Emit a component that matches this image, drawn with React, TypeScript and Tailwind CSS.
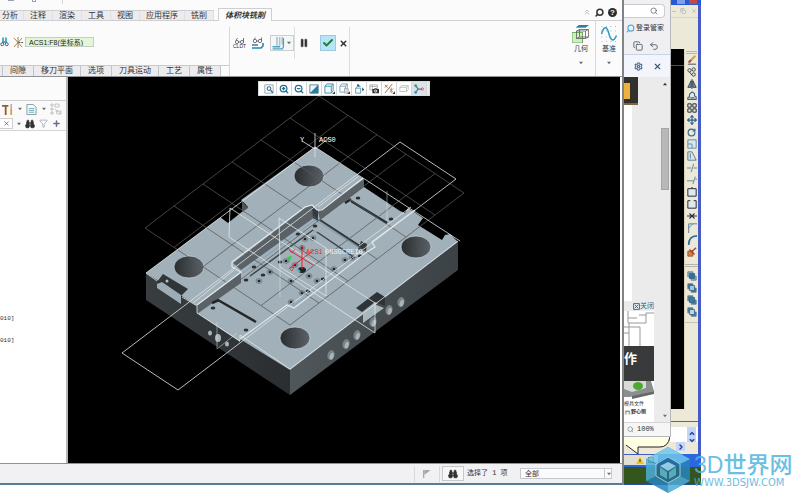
import React, { useState } from 'react';
import {
	Binoculars,
	Check,
	ChevronDown,
	ChevronRight,
	ChevronUp,
	ChevronsUp,
	Copy,
	Filter,
	Move,
	Pause,
	Plus,
	RotateCw,
	Search,
	Settings,
	Undo2,
	X,
	ZoomIn,
	ZoomOut,
} from 'lucide-react';

const ribbonTabs = ['注释', '渲染', '工具', '视图', '应用程序', '铣削'];
const dashboardTabs = ['间隙', '移刀平面', '选项', '刀具运动', '工艺', '属性'];

interface IconProps {
	children: React.ReactNode;
	className?: string;
}

function Icon({ children, className = 'h-3 w-3' }: IconProps) {
	return (
		<svg className={className} viewBox="0 0 12 12" fill="none" stroke="#26323c" strokeWidth={1} aria-hidden="true">
			{children}
		</svg>
	);
}

function Glasses() {
	return (
		<>
			<circle cx="3" cy="4" r="1.700" stroke="#555" strokeWidth=".8" />
			<circle cx="8" cy="4" r="1.700" stroke="#555" strokeWidth=".8" />
			<path d="M4.700 4h1.600M2 2.400 3.500.5M9.500 3.500V.5" stroke="#555" strokeWidth=".8" />
		</>
	);
}

function Caret() {
	return (
		<svg className="h-1 w-1 shrink-0" viewBox="0 0 6 4" aria-hidden="true">
			<path d="M0 0h6L3 4z" fill="#6c6c6c" />
		</svg>
	);
}

function Header() {
	return (
		<header>
			<div className="flex h-2 items-start gap-[18px] pl-2">
				<span className="h-px w-[6px] bg-gray-400" />
				<span className="h-[2px] w-1 border-x border-b border-gray-400" />
				<span className="ml-2 h-1 w-px bg-gray-300" />
			</div>
			<nav className="flex h-[13px] items-stretch">
				<div className="mt-[2px] flex border-t border-b border-[#cfcfd2] bg-[#ececee]">
					<button className="w-6 border-r border-[#e0e0e2] pl-[2px] text-left leading-[10px]">分析</button>
					{ribbonTabs.map((tab) => (
						<button key={tab} className="border-r border-[#e0e0e2] px-[6px] leading-[10px]">
							{tab}
						</button>
					))}
				</div>
				<span className="w-1 border-b border-[#cfcfd2]" />
				<button className="border-x border-t border-[#cfcfd2] bg-[#fbfbfb] px-[6px] leading-[13px] font-bold italic">
					体积块铣削
				</button>
				<div className="flex flex-1 items-start justify-end gap-1 border-b border-[#cfcfd2] pr-[5px]">
					<button aria-label="Collapse ribbon">
						<ChevronsUp className="h-2 w-2 text-gray-400" />
					</button>
					<button aria-label="Search commands">
						<Search className="h-[9px] w-[9px] -scale-x-100" strokeWidth={4} />
					</button>
					<button
						aria-label="Help"
						className="h-[9px] w-[9px] rounded-full bg-[#2c2c2c] text-center text-[8px] leading-[9px] font-bold text-white"
					>
						?
					</button>
				</div>
			</nav>
		</header>
	);
}

function Ribbon() {
	const [reference, setReference] = useState('ACS1:F8(坐标系)');

	return (
		<div className="flex h-14 border-b border-[#8f9296]">
			<div className="mt-[6px] flex w-[230px] flex-col justify-between border-r border-[#d8d8da]">
				<div className="flex items-center gap-[4px] pt-[9px]">
					<Icon className="h-3 w-[9px]">
						<path d="M4 0v6H8V0" stroke="#4ba6c6" strokeWidth="2.500" />
						<circle cx="3" cy="9" r="2" />
						<circle cx="9" cy="9" r="2" />
					</Icon>
					<label className="flex items-center gap-[1px]">
						<Icon className="h-[11px] w-[11px]">
							<path d="M1 1l9 10M10 1 1 11M5.500 0v12" stroke="#9d7845" />
							<path d="M6 6h6" stroke="#444" strokeDasharray="2 1" />
						</Icon>
						<input
							aria-label="Reference"
							value={reference}
							onChange={(e) => setReference(e.target.value)}
							className="h-[10px] w-[69px] border border-[#c5cfbf] bg-[#e4f6d6] px-[3px] text-[7px] leading-[8px] text-[#222] outline-none"
						/>
					</label>
				</div>
				<div className="flex h-[11px] border-t border-[#cacacc]">
					<span className="w-[3px] border-r border-[#c4c4c8] bg-[#ececee]" />
					{dashboardTabs.map((tab) => (
						<button key={tab} className="border-r border-[#c4c4c8] bg-[#ececee] px-[7px] leading-[10px]">
							{tab}
						</button>
					))}
				</div>
			</div>

			<div className="mt-[6px] flex w-[120px] items-start border-r border-[#dedee0]">
				<div className="flex h-8 items-center gap-[6px] border-r border-[#dedee0] pl-[3px]">
					<button className="flex flex-col items-center text-[5px] leading-[5px]" aria-label="Play CL data">
						<svg className="h-[6px] w-3" viewBox="0 0 12 6" fill="none" stroke="#555" strokeWidth=".8" aria-hidden="true">
							<circle cx="3" cy="4" r="1.600" />
							<circle cx="8" cy="4" r="1.600" />
							<path d="M4.600 4h1.800M2 2.400 3.500 0M9.500 4V0" />
						</svg>
						CLDT
					</button>
					<button aria-label="Simulate path">
						<Icon>
							<Glasses />
							<path d="M0 8h6M0 11h9l2-2V6" stroke="#2589ad" strokeWidth="1.600" />
						</Icon>
					</button>
					<button className="flex h-4 w-6 items-center justify-between border border-[#c9ced1] bg-[#f4f7f8] pr-[2px]" aria-label="Cut type">
						<Icon className="h-[13px] w-[14px]">
							<path d="M5 0v8M7.500 0v8M10 0v7" stroke="#b4c2c8" strokeWidth="1.500" />
							<path d="M1 9h7M1 11h9l1-2V1" stroke="#4ba3c2" strokeWidth="1.200" />
						</Icon>
						<Caret />
					</button>
				</div>
				<div className="flex h-8 items-center pl-1">
					<button aria-label="Pause">
						<Pause className="h-[10px] w-[10px] fill-[#333]" strokeWidth={1} />
					</button>
					<button className="ml-[11px] grid h-4 w-4 place-items-center border border-[#9bcbe1] bg-[#b9e3f6]" aria-label="Accept">
						<Check className="h-3 w-3 text-[#23823a]" strokeWidth={4} />
					</button>
					<button className="ml-[3px]" aria-label="Cancel">
						<X className="h-[9px] w-[9px]" strokeWidth={4} />
					</button>
				</div>
			</div>

			<div className="flex flex-1 justify-end">
				<button className="flex w-7 flex-col items-center pt-1 text-[7px] leading-3">
					<Icon className="h-[18px] w-[18px]">
						<path d="M5 0h6L9 1.500H3z" fill="#287fa7" stroke="#287fa7" strokeWidth=".5" />
						<path d="M0 5h7v7H0z" fill="#cdeec2" stroke="#73ad62" strokeWidth=".7" />
						<path d="M3 4h6v5H3zM5 3h6v5H5zM3 4l2-1M9 4l2-1M9 9l2-1M3 9l2-1" strokeWidth=".5" stroke="#555" />
					</Icon>
					几何
					<span className="mt-[2px] flex h-3 items-center">
						<Caret />
					</span>
				</button>
				<button className="flex w-[27px] flex-col items-center border-l border-[#d8d8da] pt-1 text-[7px] leading-3">
					<Icon className="h-[18px] w-[18px]">
						<path d="M1 1h10M1 4h10M1 8h10M1 11h10" strokeDasharray=".5 2.500" stroke="#8b9ba0" strokeWidth=".6" />
						<path d="M1 6C3-1 5 2 6 6s3 6 5 1" stroke="#359abd" />
					</Icon>
					基准
					<span className="mt-[2px] flex h-3 items-center">
						<Caret />
					</span>
				</button>
			</div>
		</div>
	);
}

function ModelTree() {
	return (
		<aside className="w-[68px] shrink-0 border-r-2 border-[#b5b7ba] bg-white">
			<div className="h-6 border-b border-[#cdcdcf] bg-[#fbfbfb]" />
			<div className="flex h-4 items-center gap-[4px] bg-[#fafafa] pl-[2px]">
				<button className="flex items-center gap-[5px]" aria-label="Tree settings">
					<Icon className="h-[11px] w-[11px]">
						<path d="M0 2h7M4 2v10" stroke="#91612b" strokeWidth="2" />
						<path d="M10 0v5" stroke="#777" />
						<path d="M10 5v7" stroke="#dda04c" strokeWidth="2" />
					</Icon>
					<Caret />
				</button>
				<button className="flex items-center gap-[5px]" aria-label="Tree display">
					<Icon className="h-[11px] w-[11px]">
						<path d="M1 .5h7l3 3v8H1z" fill="#f5fafc" stroke="#7e959e" />
						<path d="M3 5h6M3 7h6M3 9h6" stroke="#69a8be" />
					</Icon>
					<Caret />
				</button>
				<button aria-label="Show items">
					<Icon className="h-3 w-3">
						<path d="M1 1h2v2H1zM1 5h2v2H1zM1 9h2v2H1zM5 1h4v3H5zM5 6l6 5M6 8h5v3H7z" stroke="#b5b5b5" strokeWidth=".8" />
					</Icon>
				</button>
			</div>
			<div className="flex h-[14px] items-center gap-[4px] border-b border-[#d5d5d7] bg-[#fafafa]">
				<button className="grid h-[11px] w-[13px] place-items-center border border-l-0 border-[#cfcfd1] bg-white" aria-label="Clear filter">
					<X className="h-[7px] w-[7px]" />
				</button>
				<Caret />
				<button aria-label="Find">
					<Binoculars className="h-[10px] w-[10px] fill-[#333]" strokeWidth={2} />
				</button>
				<button aria-label="Filter">
					<Filter className="h-[9px] w-[9px] text-gray-400" />
				</button>
				<button aria-label="Add">
					<Plus className="h-[9px] w-[9px] text-gray-500" strokeWidth={4} />
				</button>
			</div>
			<ul className="pt-[177px] font-['Liberation_Mono',monospace] text-[6px] leading-[22px]">
				<li>010]</li>
				<li>010]</li>
			</ul>
		</aside>
	);
}

const viewTools = [
	{
		label: 'Refit',
		icon: (
			<Icon className="h-[10px] w-[10px]">
				<path d="M1 1h10v10H1z" stroke="#8b9ca4" />
				<circle cx="6" cy="5.500" r="2.200" stroke="#35708c" strokeWidth="1.300" />
				<path d="m8 7.500 2.500 3" stroke="#35708c" strokeWidth="1.500" />
			</Icon>
		),
	},
	{ label: 'Zoom in', icon: <ZoomIn className="h-[10px] w-[10px] text-[#246f90]" strokeWidth={3} /> },
	{ label: 'Zoom out', icon: <ZoomOut className="h-[10px] w-[10px] text-[#246f90]" strokeWidth={3} /> },
	{
		label: 'Repaint',
		icon: (
			<Icon className="h-[10px] w-[10px]">
				<path d="M1 1h10v10H1z" fill="#eef6f9" stroke="#4f7382" />
				<path d="M11 1v10H1z" fill="#277f9f" stroke="none" />
			</Icon>
		),
	},
	{
		label: 'Display style',
		icon: (
			<Icon className="h-[11px] w-[11px]">
				<path d="M1 3.500h7V11H1zM1 3.500 3 1h7L8 3.500M10 1v7.500L8 11" fill="#f3fafc" stroke="#3b91ad" />
				<path d="M12 9v3H9z" fill="#333" stroke="none" />
			</Icon>
		),
	},
	{
		label: 'Saved orientations',
		icon: (
			<Icon className="h-[11px] w-[11px]">
				<path d="M1 3.500h6V10H1zM1 3.500 3 1h6L7 3.500M9 1v5" stroke="#6fa4b5" />
				<path d="M6 6h4v5H6z" fill="#ddd" stroke="#aaa" />
				<path d="M12 9v3H9z" fill="#333" stroke="none" />
			</Icon>
		),
	},
	{
		label: 'View manager',
		icon: (
			<Icon className="h-[10px] w-[10px]">
				<path d="M2 5h6v6H2zM2 5l2-2h4" stroke="#3b91ad" />
				<path d="M10 4v5l2-2.500zM4 0v3l3-1.500z" fill="#222" stroke="none" />
			</Icon>
		),
	},
	{
		label: 'Capture',
		icon: (
			<Icon className="h-[10px] w-[10px]">
				<path d="M1 1h9v6H1zM1 3h9M4 1v6" stroke="#aaa" />
				<path d="M4 6h2l1-1h2l1 1h2v5H4z" fill="#333" stroke="none" />
				<circle cx="8" cy="8.500" r="1.300" stroke="white" />
			</Icon>
		),
	},
	{
		label: 'Datum display',
		icon: (
			<Icon className="h-[11px] w-[11px]">
				<path d="M1 11 9 1M1 2l3 3M4 2 1 5" stroke="#8c6a3f" />
				<path d="m6 6 4 4M10 6l-4 4M8 5v6" stroke="#c48a35" />
				<path d="M12 9v3H9z" fill="#333" stroke="none" />
			</Icon>
		),
	},
	{
		label: 'Annotations',
		icon: (
			<Icon className="h-[10px] w-[10px]">
				<path d="M1 4h8v5H1zM3 2h8v5M1 4l2-2M9 4l2-2M9 9l2-2" stroke="#bbb" />
			</Icon>
		),
	},
	{
		label: 'Spin center',
		icon: (
			<Icon className="h-[10px] w-[10px]">
				<path d="M2 2l3 4-3 4M5 6h5" stroke="#65717a" strokeWidth="1.500" />
				<circle cx="2" cy="2" r="1.300" fill="#4a9d78" stroke="#4a9d78" />
				<circle cx="2" cy="10" r="1.300" fill="#39c" stroke="#39c" />
				<circle cx="10" cy="6" r="1.300" fill="#fff" stroke="#c33" />
			</Icon>
		),
	},
];

// Datum plane grid: six cells one way, five the other
const gridLines = [
	...[0, 1, 2, 3, 4, 5, 6].map((i) => [145 + i * 29, 228 - i * 22, 290 + i * 29, 325 - i * 22]),
	...[0, 1, 2, 3, 4, 5].map((i) => [145 + i * 29, 228 + i * 19.4, 319 + i * 29, 96 + i * 19.4]),
];

const boreHoles = [[309, 176], [189, 267], [295, 338], [416, 247]];
const coolingHoles = [[331, 355], [346, 344], [357, 335], [373, 322], [389, 310], [401, 302]];
const screwHoles = [
	[259, 281], [270, 272], [286, 261], [291, 281], [302, 248], [305, 239], [313, 238],
	[309, 276], [317, 281], [334, 269], [345, 260], [352, 258], [302, 293], [291, 302], [295, 265],
];
const plainHoles = [
	[246, 280], [254, 267], [263, 275], [280, 262], [298, 234], [315, 226], [391, 219], [358, 198],
	[213, 308], [246, 330], [323, 279], [308, 291], [360, 256],
];

function PlateModel() {
	return (
		<svg className="h-full w-full" viewBox="68 77 552 386" fill="none" role="img" aria-label="Mold plate">
			<defs>
				<linearGradient id="bore">
					<stop offset="0" stopColor="#292d30" />
					<stop offset="1" stopColor="#5b6267" />
				</linearGradient>
				<linearGradient id="front">
					<stop offset="0" stopColor="#383d40" />
					<stop offset="1" stopColor="#2a2e30" />
				</linearGradient>
				<linearGradient id="side">
					<stop offset="0" stopColor="#50575b" />
					<stop offset="1" stopColor="#3b4144" />
				</linearGradient>
				<clipPath id="plate">
					<path d="M146 273 315 147l145 95-170 127z" />
				</clipPath>
			</defs>

			<path d="M146 273v27l144 95v-27z" fill="url(#front)" />
			<path d="M290 369v26l168-125v-28z" fill="url(#side)" />
			<path
				d="M315 147 364 179v8l36 24 5 2 3-5 15 10-5 7 24 15 3-5 5-1 8 8-168 128-50-31v3l-43-29v-7l-51-33 75-56 5 4 20-16-5-5z"
				fill="#a1b0b9"
			/>
			<path d="m220 217 8 6 20-16-6-6-6 4-6 4z" fill="#000" />
			<path d="m242 201 6 7-6 4z" fill="#50575b" />

			{/* channel walls and floor */}
			<path d="m197 305 44-32v10l-44 31zM233 263l72-55 7-3 6 5v10l-3-3-74 53zM318 212l46-33v8l-44 33z" fill="#5a6267" />
			<path d="m312 206 6 5v10l-5-3z" fill="#33393c" />
			<path d="m243 273 72-53 52 33-74 53" stroke="#7fa0b5" strokeWidth="1" />
			<path d="m247 279 66-49 46 29" stroke="#7f9db1" strokeWidth="1" />
			<path d="m320 220 43 28" stroke="#2d3336" strokeWidth="2" />
			<path d="m317 232 38 26M250 276l63-46" stroke="#3d464a" strokeWidth="1.500" />
			<path d="m351 201 36 22M218 300l38 22M345 203l6-4M212 303l7-3" stroke="#22272a" strokeWidth="2.500" />
			<path d="m361 241 6 3-1 7-8-1z" fill="#35393c" />

			{/* side pockets */}
			<path d="m157 282 6-8 25 15-7 7z" fill="#303538" />
			<path d="m157 284 5-2 19 13v9l-24-16z" fill="#9eadb5" />
			<circle cx="167" cy="281" r="1.500" fill="#b4c0c6" />
			<path d="m356 308 21-16 8 5v9l-10-4-13 10z" fill="#2d3336" />
			<path d="m363 314 11-10 10 4-21 15z" fill="#a9b7be" />

			{boreHoles.map(([x, y]) => (
				<ellipse key={`${x}-${y}`} cx={x} cy={y} rx="15" ry="11" fill="url(#bore)" stroke="#dce5e9" strokeWidth=".6" />
			))}
			{coolingHoles.map(([x, y]) => (
				<g key={`${x}-${y}`} transform={`rotate(15 ${x} ${y})`}>
					<ellipse cx={x} cy={y} rx="3.500" ry="5" fill="#788287" />
					<ellipse cx={x + 1} cy={y + 1} rx="2" ry="3.500" fill="#aab4b8" />
				</g>
			))}
			<ellipse cx="210" cy="333" rx="2" ry="2.500" fill="#aab4b8" />
			<ellipse cx="218" cy="338" rx="3" ry="4" fill="#aab4b8" />
			<ellipse cx="227" cy="344" rx="2" ry="2.500" fill="#aab4b8" />
			{screwHoles.map(([x, y]) => (
				<g key={`${x}-${y}`}>
					<ellipse cx={x} cy={y} rx="3" ry="2.300" stroke="#5d676d" strokeWidth=".7" />
					<ellipse cx={x} cy={y} rx="1.500" ry="1.300" fill="#1f2427" />
				</g>
			))}
			{plainHoles.map(([x, y]) => (
				<ellipse key={`${x}-${y}`} cx={x} cy={y} rx="2.300" ry="1.600" fill="#2a3034" />
			))}
			<ellipse cx="302" cy="270" rx="4" ry="3" fill="#1c2225" />

			<g stroke="#808080" strokeOpacity=".65" strokeWidth=".8">
				{gridLines.map(([x1, y1, x2, y2]) => (
					<line key={`${x1}-${y1}-${x2}-${y2}`} x1={x1} y1={y1} x2={x2} y2={y2} />
				))}
			</g>
			<g stroke="#3c4448" strokeOpacity=".55" strokeWidth=".8" clipPath="url(#plate)">
				{gridLines.map(([x1, y1, x2, y2]) => (
					<line key={`${x1}-${y1}-${x2}-${y2}`} x1={x1} y1={y1} x2={x2} y2={y2} />
				))}
			</g>

			{/* edges and datum planes */}
			<g stroke="#e2e8ea" strokeWidth=".8">
				<path d="m363 178-41 32-5 0-5-5-7 2-73 55v5l9 5-44 33" strokeWidth="1.200" />
				<path d="m415 210-43 32 3 5-8 5-69 53-4 3-7-3-47 34" strokeWidth="1.200" />
				<path d="m411 207-52 39M234 270l-41 33M359 176l-41 31" />
				<path d="M146 273 315 147l48 31M363 178l97 63M146 273l11 8M182 297l15 9v7l43 28v-6l50 34 168-128" />
				<path d="m400 142 56 37-278 211-56-37z" />
				<path d="m230 208 145 95v30L229 237z" />
				<path d="m279 218 47 30v48l-46-29z" />
				<path d="M387 191v30M217 322v27l20-16M280 267v30" strokeOpacity=".6" />
				<path d="M315 133v24M302 141l13 8 14-11" />
			</g>

			<g stroke="#e5232c" strokeWidth="1">
				<path d="M302 245v24M289 250l24 15M290 268l24-18" />
				<path d="m289 249 3 4 3-4M289 268l5-1-2 4z" strokeWidth=".7" />
			</g>
			<path d="m287 257 5-1-2 5z" fill="#28d640" />
			<path d="m297 269 3 3" stroke="#25c8c9" strokeWidth="2" />
			<g fontFamily="'Liberation Mono', monospace" fontSize="7" fill="#fff">
				<text x="300" y="142">Y</text>
				<text x="319" y="142">ACS0</text>
				<text x="306" y="254" fill="#f5252e">ACS1</text>
				<text x="325" y="254" fill="#eef3f5">0NSGCREIG</text>
			</g>
		</svg>
	);
}

function Viewport() {
	return (
		<section className="relative min-w-0 flex-1 bg-black">
			<PlateModel />
			<div className="absolute top-1 left-1/2 flex h-[15px] -translate-x-1/2 border border-[#d8dade] bg-white pl-[3px]">
				{viewTools.map((tool) => (
					<button key={tool.label} aria-label={tool.label} className="grid w-[15px] place-items-center border-r border-[#d4d6da] nth-11:bg-[#d9e3e9]">
						{tool.icon}
					</button>
				))}
				<span className="w-[2px] bg-[#e9ebee]" />
			</div>
		</section>
	);
}

function StatusBar() {
	return (
		<footer className="flex h-[22px] items-center justify-end border-t border-b-2 border-[#8c939b] border-b-[#587b98] bg-[#f1f1f4]">
			<span className="h-4 w-px bg-[#d9d9dc]" />
			<Icon className="mx-2 h-2 w-2">
				<path d="M1 0v12" stroke="#aaa" strokeWidth="2" />
				<path d="M2 0h9L8 3l-6 4z" fill="#a5a7aa" stroke="none" />
			</Icon>
			<span className="h-4 w-px bg-[#d9d9dc]" />
			<button className="ml-[2px] grid h-[15px] w-[22px] place-items-center border border-[#c6c8cc] bg-[#f7f7f8]" aria-label="Find">
				<Binoculars className="h-[10px] w-[10px] fill-[#333]" />
			</button>
			<output className="ml-[3px] w-[53px] font-['Liberation_Mono','Noto_Sans_CJK_SC',monospace] text-[7px]">选择了 1 项</output>
			<div className="relative mr-[10px] w-[92px]">
				<select
					aria-label="Selection filter"
					defaultValue="全部"
					className="block h-[11px] w-full appearance-none border border-[#c5c9cd] bg-[#fbfbfb] px-1 text-[7px] leading-[9px]"
				>
					<option>全部</option>
				</select>
				<span className="pointer-events-none absolute inset-y-0 right-0 flex w-2 items-center justify-center border-l border-[#c5c9cd]">
					<Caret />
				</span>
			</div>
		</footer>
	);
}

function BrowserWindow() {
	return (
		<section className="flex w-[47px] shrink-0 flex-col border-r border-b border-[#b5b8bc] bg-[#f0f0f3]">
			<div className="mt-1 mr-[5px] flex h-[14px] items-center justify-end rounded-r-sm border border-l-0 border-[#cbcbd0] bg-white pr-[6px]">
				<button aria-label="Search">
					<Search className="h-2 w-2 text-gray-600" />
				</button>
			</div>
			<button className="mt-1 flex h-3 items-center gap-[1px] pl-[2px] text-[7px] whitespace-nowrap">
				<Search className="h-[9px] w-[9px] -scale-x-100 text-[#51a9dc]" strokeWidth={3} />
				登录管家
			</button>
			<div className="mt-1 flex h-[17px] items-center gap-[6px] border-b border-[#c9d3e3] pl-[9px]">
				<button aria-label="Windows">
					<Copy className="h-[10px] w-[10px] text-gray-600" />
				</button>
				<button aria-label="Undo">
					<Undo2 className="h-[10px] w-[10px] text-gray-600" />
				</button>
			</div>
			<div className="flex h-[22px] items-center gap-[10px] bg-[#f2f6fc] pl-[10px]">
				<button aria-label="Settings">
					<Settings className="h-[9px] w-[9px] text-[#506b91]" strokeWidth={3} />
				</button>
				<button aria-label="Close">
					<X className="h-[9px] w-[9px] text-[#43556f]" strokeWidth={3} />
				</button>
			</div>
			<div className="flex flex-1 bg-[#ebebec]">
				<div className="flex w-[30px] flex-col">
					<div className="h-7 w-[14px] border-b-2 border-[#7c6645] bg-[#34302c] py-[6px]">
						<div className="h-4 w-[6px] bg-[#eeb13d]" />
					</div>
					<div className="w-2 flex-1 bg-white" />
					<a href="#close" className="flex items-center justify-end text-[7px] leading-[10px] text-[#315d88]">
						<Icon className="h-[7px] w-[7px]">
							<path d="M1 1h10v10H1zM3 3l6 6M9 3 3 9" stroke="#315d88" strokeWidth="1.500" />
						</Icon>
						关闭
					</a>
					<svg className="h-[35px] w-[30px] bg-white" viewBox="0 0 30 35" fill="none" stroke="#999" aria-hidden="true">
						<path d="M4 0v12h18V2h8M4 7h9M0 16h16v19M5 12v23M15 4h7M0 22h5" />
					</svg>
					<div className="h-[35px] bg-[#383a3b] pt-[5px] text-[13px] leading-4 font-bold text-white">作</div>
					<svg className="h-[18px] w-[30px] bg-white" viewBox="0 0 30 18" aria-hidden="true">
						<path d="M0 0h27l3 10-24 6H0z" fill="#8b8e8e" />
						<path d="M0 0h22v7L8 11 0 8z" fill="#d7dbd6" />
						<ellipse cx="14" cy="5" rx="5" ry="4" fill="#4ca832" />
						<path d="m8 15 22-5v3L8 18z" fill="#656969" />
					</svg>
					<div className="h-[23px] bg-white text-[5px] leading-[8px] whitespace-nowrap">
						<p>模具文件</p>
						<p className="font-bold">╔╗野心侧</p>
					</div>
				</div>
				<div className="flex flex-1 flex-col items-end justify-between pr-[1px]">
					<span className="flex w-2 flex-col items-center pt-[5px]">
						<svg className="h-1 w-1" viewBox="0 0 6 4" aria-hidden="true">
							<path d="M0 4h6L3 0z" fill="#333" />
						</svg>
						<span className="mt-[42px] h-[62px] w-2 border border-[#a5a5a5] bg-[#b8b8b8]" />
					</span>
					<span className="flex w-2 justify-center pb-1">
						<Caret />
					</span>
				</div>
			</div>
			<div className="flex h-[14px] items-center gap-[3px] border-t border-[#d6d6d9] bg-[#f6f6f7] pl-[3px] font-['Liberation_Mono',monospace] text-[7px]">
				<Search className="h-[7px] w-[7px] text-gray-500" />
				100%
			</div>
		</section>
	);
}

const modifyTools = [
	{
		label: 'Erase',
		icon: (
			<>
				<path d="M10 1 5 6" stroke="#d7a528" strokeWidth="2.500" />
				<path d="M5 6 2 9" stroke="#b54541" strokeWidth="2.500" />
				<path d="M1 11h10" />
			</>
		),
	},
	{ label: 'Copy', icon: <><circle cx="3" cy="4" r="2" /><circle cx="8" cy="3" r="2" /><circle cx="8" cy="9" r="2" /><path d="m3 6 3 4" /></> },
	{ label: 'Mirror', icon: <><path d="M5 2v8H1zM7 2v8h4z" fill="#6e9dbd" /><path d="M6 0v12" /></> },
	{ label: 'Offset', icon: <path d="M1 10h10V7L9 6V3L6 1 3 4v3L1 8zM4 8h5" stroke="#326589" strokeWidth="1.300" /> },
	{ label: 'Array', icon: <path d="M1 1h4v4H1zM7 1h4v4H7zM1 7h4v4H1zM7 7h4v4H7z" strokeWidth="1.200" /> },
	{ label: 'Move', icon: null },
	{ label: 'Rotate', icon: null },
	{ label: 'Scale', icon: <><path d="M1 1h10v10H1z" fill="#d8e7ef" stroke="#557f9b" /><path d="M1 6h5v5" stroke="#557f9b" /></> },
	{ label: 'Stretch', icon: <path d="M1 1v10h10L6 1zM4 3v6" stroke="#436b88" fill="#dbe7ee" /> },
	{ label: 'Trim', icon: <path d="M0 6h5M8 6h4M8 1 5 11" stroke="#54778e" /> },
	{ label: 'Extend', icon: <path d="M0 7h8M10 2 7 11M10 5h2" stroke="#54778e" /> },
	{ label: 'Break at point', icon: <path d="M1 2h10v9H1zM5 1h2" fill="#e0e8ec" strokeWidth="1.200" /> },
	{ label: 'Break', icon: <path d="M4 2H1v9h10V2H8" fill="#e0e8ec" strokeWidth="1.200" /> },
	{ label: 'Join', icon: <path d="M0 6h12M3 3l3 3-3 3M9 3 6 6l3 3" strokeWidth="1.300" /> },
	{ label: 'Chamfer', icon: <path d="M2 12V6l5-5h5M2 1v5M2 1h5" stroke="#456f8f" /> },
	{ label: 'Fillet', icon: <path d="M2 12C2 5 5 1 12 1" stroke="#316e9a" strokeWidth="2" /> },
	{
		label: 'Explode',
		icon: (
			<>
				<path d="M1 5h6v6H1z" fill="#d28045" stroke="#98492d" />
				<path d="m5 6 6-5M3 3l6 6" stroke="#a13b26" strokeWidth="1.500" />
			</>
		),
	},
];

const orderTools = [
	{ label: 'Bring to front', back: '#8db2cc', front: '#376f96' },
	{ label: 'Send to back', back: '#376f96', front: '#a6c4d7' },
	{ label: 'Bring above', back: '#537f9c', front: '#3d789f' },
	{ label: 'Send under', back: '#457d9f', front: '#c1d3dd' },
];

function CadWindow() {
	return (
		<section className="flex flex-1 flex-col bg-[#ece9d8]">
			<div className="flex h-[5px] justify-end gap-1 bg-[#2858d4] pr-1">
				<span className="h-1 w-2 bg-[#7f9fe9]" />
				<span className="h-1 w-2 bg-[#bf4b44]" />
			</div>
			<div className="flex flex-1 border-r-[3px] border-[#465bc6]">
				<div className="flex flex-1 flex-col">
					<div className="flex h-[13px] items-center justify-between border-b border-[#d9d5c3] px-px text-[7px] text-gray-400">
						<span>–</span>
						<Copy className="h-[6px] w-[6px]" />
						<X className="h-[6px] w-[6px]" />
					</div>
					<div className="h-[31px]" />
					<div className="flex flex-1">
						<div className="flex w-[13px] flex-col bg-black pt-4">
							<span className="h-px bg-[#674b40]" />
						</div>
						<div className="flex flex-1 flex-col items-center border-l border-[#d6d1bb] pt-[2px]">
							<span className="h-[3px] w-[11px] border-y border-[#b9b5a5]" />
							{modifyTools.map((tool) => (
								<button key={tool.label} aria-label={tool.label} className="grid h-3 w-3 place-items-center">
									{tool.label === 'Move' ? <Move className="h-[10px] w-[10px] text-[#2d638d]" strokeWidth={3} /> : null}
									{tool.label === 'Rotate' ? <RotateCw className="h-[9px] w-[9px] text-[#2d638d]" strokeWidth={3} /> : null}
									{tool.icon ? <Icon className="h-[10px] w-[10px]">{tool.icon}</Icon> : null}
								</button>
							))}
							<span className="mt-[6px] mb-[3px] h-[3px] w-[13px] border-y border-[#b9b5a5]" />
							{orderTools.map((tool) => (
								<button key={tool.label} aria-label={tool.label} className="grid h-3 w-3 place-items-center">
									<Icon className="h-[10px] w-[10px]">
										<path d="M1 1h6v6H1zM5 6h6v5H5z" fill={tool.back} stroke="#507b98" />
										<path d="M3 3h6v6H3z" fill={tool.front} stroke="#386786" />
									</Icon>
								</button>
							))}
							<span className="mt-1 h-px w-full bg-[#c8c4b2]" />
						</div>
					</div>
					<div className="h-3" />
					<div className="flex h-4 flex-col justify-end border-t border-[#666]">
						<div className="flex h-[10px] justify-end bg-white pr-[2px]">
							<div className="flex w-[9px] flex-col items-center justify-end bg-[#c5d5fa] text-[#2755a2]">
								<ChevronUp className="h-[7px] w-2" strokeWidth={5} />
							</div>
						</div>
					</div>
				</div>
			</div>
		</section>
	);
}

function Desktop() {
	return (
		<div>
			<div className="flex h-[18px] border-r-[3px] border-b border-[#465bc6] bg-[#ece9d8]">
				<svg className="h-[17px] w-[46px]" viewBox="0 0 46 17" fill="none" aria-hidden="true">
					<path d="M0 0h46q-2 10-10 10H14v7L0 7z" fill="#ffffe1" />
					<path d="M46 0q-2 10-10 10H14v7L2 8" stroke="#222" />
				</svg>
				<div className="flex flex-1 flex-col items-end">
					<div className="flex w-full justify-end bg-white pr-[2px]">
						<span className="grid h-[5px] w-[9px] place-items-center bg-[#c5d5fa] text-[#2755a2]">
							<ChevronDown className="h-[7px] w-2" strokeWidth={5} />
						</span>
					</div>
					<button className="mr-[13px] grid h-[9px] w-[9px] place-items-center bg-[#c5d5fa]" aria-label="Scroll right">
						<ChevronRight className="h-2 w-2 text-[#173d8c]" strokeWidth={4} />
					</button>
				</div>
			</div>
			<div className="flex h-3 items-center gap-1 border-r-[3px] border-b-2 border-[#2866e0] bg-[#e4e0cf] pl-3">
				<svg className="h-[7px] w-[8px]" viewBox="0 0 8 7" aria-hidden="true">
					<path d="M4 0 8 7H0z" fill="#efc21b" />
					<path d="M4 2v3" stroke="#333" />
				</svg>
				<span className="h-[6px] w-[6px] border border-[#554d24] bg-[#aeb264]" />
				<span className="h-3 flex-1 bg-[#2b68df]" />
			</div>
			<div className="h-[18px] border-b border-[#27509b] bg-[#34561d]" />
		</div>
	);
}

function Watermark() {
	return (
		<div className="pointer-events-none absolute right-[5px] bottom-[6px] flex items-center gap-[2px] text-[#52b4df] opacity-85">
			<svg className="h-12 w-12" viewBox="0 0 48 48" aria-hidden="true">
				<path d="m24 1 22 12v22L24 47 2 35V13z" fill="#2784bd" />
				<path d="M24 1 46 13 36 18 24 11 12 17 2 13z" fill="#70c7e9" />
				<path d="m2 13 10 5v12l-10 5zM46 35l-10-5-12 7v10z" fill="#4cadda" />
				<path d="m24 11 12 7v12l-12 7-12-7V18z" fill="#266e94" stroke="#a7e0f3" />
				<path d="m24 16 8 4-8 5-8-5z" fill="#a4dced" />
				<path d="M16 21v8l7 4v-7zM32 21v8l-7 4v-7z" fill="#5fb9db" />
			</svg>
			<div className="w-[101px]">
				<p className="text-[23px] leading-[26px] font-medium whitespace-nowrap">3D世界网</p>
				<p className="font-['DejaVu_Sans',sans-serif] text-[10px] leading-[10px]">WWW.3DSJW.COM</p>
			</div>
		</div>
	);
}

export default function App() {
	return (
		<div className="relative flex min-h-screen bg-white pr-[99px] pb-[15px] font-['Liberation_Sans','Noto_Sans_CJK_SC',sans-serif] text-[8px] text-[#333]">
			<main className="flex min-w-0 flex-1 flex-col border-r-2 border-[#818487] bg-[#fbfbfb]">
				<Header />
				<Ribbon />
				<div className="flex min-h-[386px] flex-1 pr-[2px]">
					<ModelTree />
					<Viewport />
				</div>
				<StatusBar />
			</main>
			<div className="flex w-[77px] shrink-0 flex-col">
				<div className="flex flex-1">
					<BrowserWindow />
					<CadWindow />
				</div>
				<Desktop />
			</div>
			<Watermark />
		</div>
	);
}
